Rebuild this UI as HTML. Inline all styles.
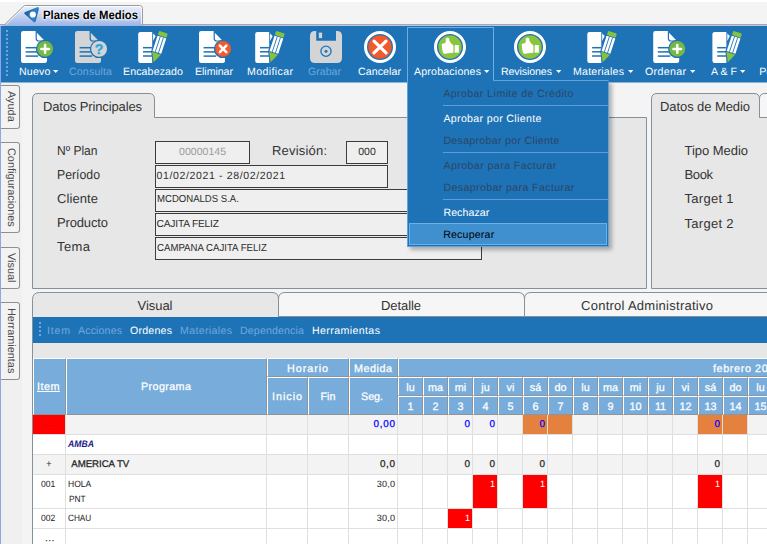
<!DOCTYPE html>
<html lang="es"><head><meta charset="utf-8"><title>Planes de Medios</title>
<style>
html,body{margin:0;padding:0;}
body{width:767px;height:544px;overflow:hidden;position:relative;background:#f4f4f4;font-family:"Liberation Sans",sans-serif;text-rendering:geometricPrecision;}
.a{position:absolute;display:block;}
.t{position:absolute;white-space:pre;line-height:1;}
</style></head><body>
<div class="a" style="left:0px;top:0px;width:767px;height:2px;background:#fff;"></div>
<svg class="a" style="left:0;top:0" width="767" height="26" viewBox="0 0 767 26"><defs><linearGradient id="tg" x1="0" y1="0" x2="0" y2="1"><stop offset="0" stop-color="#eef2fc"/><stop offset="0.45" stop-color="#c9d6f3"/><stop offset="1" stop-color="#9db4e6"/></linearGradient><linearGradient id="lg" x1="0" y1="0" x2="1" y2="0.3"><stop offset="0" stop-color="#1d5c9c"/><stop offset="1" stop-color="#2f8fcf"/></linearGradient></defs><path d="M0,24.5 L767,24.5" stroke="#a8a8a8" stroke-width="1"/><path d="M0,25.5 L767,25.5" stroke="#b7c6ee" stroke-width="1"/><path d="M4.5,26 L4.5,24.8 L23.4,6.4 Q24.4,5.5 26,5.5 L139.5,5.5 Q142.5,5.5 142.5,8.5 L142.5,26 Z" fill="url(#tg)" stroke="#9a9a9a" stroke-width="1"/><path d="M6,24.6 L24.2,7 Q25,6.5 26,6.5 L139.5,6.5 Q141.5,6.5 141.5,8.5 L141.5,24" fill="none" stroke="#fff" stroke-opacity="0.8" stroke-width="1"/><path d="M4,25.5 L143,25.5" stroke="#9db4e6" stroke-width="1"/><path d="M25.6,13.1 L37.6,8.4 L34.3,21.1 Z" fill="url(#lg)" stroke="url(#lg)" stroke-width="2.6" stroke-linejoin="round"/><path d="M34.3,21.1 L37.6,8.4 L38.6,9.5 L35.6,21.6 Z" fill="#123a60" fill-opacity="0.35"/><circle cx="32.8" cy="14.5" r="3.1" fill="#fff"/></svg>
<span class="t" style="left:43.40px;top:9px;font-size:12px;color:#000;transform:scaleX(0.9434);transform-origin:0 0;font-weight:bold;text-shadow:0 0 2px #fff,0 0 3px #fff,0 0 4px #fff;">Planes de Medios</span>
<div class="a" style="left:0px;top:26px;width:767px;height:57px;background:#1e73b7;"></div>
<div class="a" style="left:0px;top:26px;width:1px;height:518px;background:#8ea6e6;"></div>
<div class="a" style="left:6px;top:30px;width:2px;height:2px;background:#6ea6d9;"></div>
<div class="a" style="left:6px;top:34px;width:2px;height:2px;background:#6ea6d9;"></div>
<div class="a" style="left:6px;top:38px;width:2px;height:2px;background:#6ea6d9;"></div>
<div class="a" style="left:6px;top:42px;width:2px;height:2px;background:#6ea6d9;"></div>
<div class="a" style="left:6px;top:46px;width:2px;height:2px;background:#6ea6d9;"></div>
<div class="a" style="left:6px;top:50px;width:2px;height:2px;background:#6ea6d9;"></div>
<div class="a" style="left:6px;top:54px;width:2px;height:2px;background:#6ea6d9;"></div>
<div class="a" style="left:6px;top:58px;width:2px;height:2px;background:#6ea6d9;"></div>
<div class="a" style="left:6px;top:62px;width:2px;height:2px;background:#6ea6d9;"></div>
<div class="a" style="left:6px;top:66px;width:2px;height:2px;background:#6ea6d9;"></div>
<div class="a" style="left:6px;top:70px;width:2px;height:2px;background:#6ea6d9;"></div>
<div class="a" style="left:6px;top:74px;width:2px;height:2px;background:#6ea6d9;"></div>
<div class="a" style="left:407px;top:27px;width:87px;height:54px;border:1px solid #70acE2;border-bottom:none;box-sizing:border-box;"></div>
<svg class="a" style="left:14px;top:26px" width="48" height="40" viewBox="14 26 48 40"><path d="M21,33.2 Q21,31 23.2,31 L35.6,31 L35.6,38.5 Q35.6,41.6 38.8,41.6 L47,41.6 L47,60.8 Q47,63 44.8,63 L23.2,63 Q21,63 21,60.8 Z" fill="#fff"/><path d="M36.8,32.8 L43.4,39.6 Q44,40.4 43,40.4 L38.6,40.4 Q36.8,40.4 36.8,38.6 Z" fill="#fff"/><rect x="25.6" y="46.95" width="12.5" height="1.5" fill="#1e73b7"/><rect x="25.6" y="51.15" width="12.5" height="1.5" fill="#1e73b7"/><rect x="25.6" y="55.35" width="12.5" height="1.5" fill="#1e73b7"/><circle cx="45.1" cy="48.9" r="9.2" fill="#1e73b7"/><circle cx="45.1" cy="48.9" r="7.9" fill="#74b944"/><path d="M41.3,48.9 h7.6 M45.1,45.1 v7.6" stroke="#fff" stroke-width="2.5" stroke-linecap="round"/></svg>
<svg class="a" style="left:68px;top:26px" width="48" height="40" viewBox="68 26 48 40"><path d="M75,33.2 Q75,31 77.2,31 L89.6,31 L89.6,38.5 Q89.6,41.6 92.8,41.6 L101,41.6 L101,60.8 Q101,63 98.8,63 L77.2,63 Q75,63 75,60.8 Z" fill="#d3d4d6"/><path d="M90.8,32.8 L97.4,39.6 Q98,40.4 97,40.4 L92.6,40.4 Q90.8,40.4 90.8,38.6 Z" fill="#d3d4d6"/><rect x="79.6" y="46.95" width="12.5" height="1.5" fill="#1e73b7"/><rect x="79.6" y="51.15" width="12.5" height="1.5" fill="#1e73b7"/><rect x="79.6" y="55.35" width="12.5" height="1.5" fill="#1e73b7"/><circle cx="99.1" cy="48.9" r="9.2" fill="#1e73b7"/><circle cx="99.1" cy="48.9" r="7.9" fill="#d3d4d6"/><text x="99.1" y="53.9" font-family="Liberation Sans, sans-serif" font-weight="bold" font-size="14" fill="#29a8e0" stroke="#29a8e0" stroke-width="0.4" text-anchor="middle">?</text></svg>
<svg class="a" style="left:130px;top:26px" width="48" height="40" viewBox="130 26 48 40"><path d="M138.2,34.2 Q138.2,32 140.4,32 L152.2,32 L152.2,63 L140.4,63 Q138.2,63 138.2,60.8 Z" fill="#fff"/><path d="M153.1,33.6 L155.6,36 L153.1,41 Z" fill="#fff"/><rect x="143" y="46.95" width="9" height="1.5" fill="#1e73b7"/><rect x="143" y="51.05" width="9" height="1.5" fill="#1e73b7"/><rect x="143" y="55.25" width="9" height="1.5" fill="#1e73b7"/><g transform="translate(153.6,62.2) rotate(18.2629)"><path d="M0,1.6 L-5.8,-9.4 L-5.8,-32.5913 L5.8,-32.5913 L5.8,-9.4 Z" fill="#1e73b7"/><path d="M0,0 L-4.6,-9.4 L4.6,-9.4 Z" fill="#86c23e"/><rect x="-4.6" y="-26.3913" width="9.2" height="15.9913" fill="#fff"/><rect x="-2.1" y="-26.3913" width="0.85" height="15.9913" fill="#1e73b7"/><rect x="1.25" y="-26.3913" width="0.85" height="15.9913" fill="#1e73b7"/><rect x="-4.6" y="-31.5913" width="9.2" height="4.4" rx="1.2" fill="#86c23e"/></g></svg>
<svg class="a" style="left:192px;top:26px" width="48" height="40" viewBox="192 26 48 40"><path d="M199,33.2 Q199,31 201.2,31 L213.6,31 L213.6,38.5 Q213.6,41.6 216.8,41.6 L225,41.6 L225,60.8 Q225,63 222.8,63 L201.2,63 Q199,63 199,60.8 Z" fill="#fff"/><path d="M214.8,32.8 L221.4,39.6 Q222,40.4 221,40.4 L216.6,40.4 Q214.8,40.4 214.8,38.6 Z" fill="#fff"/><rect x="203.6" y="46.95" width="12.5" height="1.5" fill="#1e73b7"/><rect x="203.6" y="51.15" width="12.5" height="1.5" fill="#1e73b7"/><rect x="203.6" y="55.35" width="12.5" height="1.5" fill="#1e73b7"/><circle cx="223.1" cy="48.9" r="9.2" fill="#1e73b7"/><circle cx="223.1" cy="48.9" r="7.9" fill="#f05a2c"/><path d="M219.9,45.7 l6.4,6.4 M226.3,45.7 l-6.4,6.4" stroke="#fff" stroke-width="2.6" stroke-linecap="round"/></svg>
<svg class="a" style="left:247px;top:26px" width="48" height="40" viewBox="247 26 48 40"><path d="M255.2,34.2 Q255.2,32 257.4,32 L269.2,32 L269.2,63 L257.4,63 Q255.2,63 255.2,60.8 Z" fill="#fff"/><path d="M270.1,33.6 L272.6,36 L270.1,41 Z" fill="#fff"/><rect x="260" y="46.95" width="9" height="1.5" fill="#1e73b7"/><rect x="260" y="51.05" width="9" height="1.5" fill="#1e73b7"/><rect x="260" y="55.25" width="9" height="1.5" fill="#1e73b7"/><g transform="translate(270.6,62.2) rotate(18.2629)"><path d="M0,1.6 L-5.8,-9.4 L-5.8,-32.5913 L5.8,-32.5913 L5.8,-9.4 Z" fill="#1e73b7"/><path d="M0,0 L-4.6,-9.4 L4.6,-9.4 Z" fill="#86c23e"/><rect x="-4.6" y="-26.3913" width="9.2" height="15.9913" fill="#fff"/><rect x="-2.1" y="-26.3913" width="0.85" height="15.9913" fill="#1e73b7"/><rect x="1.25" y="-26.3913" width="0.85" height="15.9913" fill="#1e73b7"/><rect x="-4.6" y="-31.5913" width="9.2" height="4.4" rx="1.2" fill="#86c23e"/></g></svg>
<svg class="a" style="left:302px;top:26px" width="48" height="40" viewBox="302 26 48 40"><path d="M315,31 L316.2,31 L316.2,40.7 L336,40.7 L336,31 L337,31 Q342,31 342,36 L342,58 Q342,63 337,63 L315,63 Q310,63 310,58 L310,36 Q310,31 315,31 Z" fill="#d3d4d6"/><rect x="318.8" y="32.6" width="3.3" height="5.5" fill="#d3d4d6"/><circle cx="326" cy="51.2" r="5.1" fill="none" stroke="#1e73b7" stroke-width="1.3"/><circle cx="326" cy="51.2" r="1.5" fill="#1e73b7"/></svg>
<svg class="a" style="left:358px;top:26px" width="44" height="40" viewBox="358 26 44 40"><circle cx="380" cy="47" r="14.5" fill="none" stroke="#fff" stroke-width="3"/><circle cx="380" cy="47" r="11.7" fill="#f05a2c"/><path d="M374,41.2 l12,11.6 M386,41.2 l-12,11.6" stroke="#fff" stroke-width="3.2" stroke-linecap="round"/></svg>
<svg class="a" style="left:428px;top:26px" width="44" height="40" viewBox="428 26 44 40"><circle cx="450" cy="47" r="14.5" fill="none" stroke="#fff" stroke-width="3"/><circle cx="450" cy="47" r="11.7" fill="#8bc53f"/><path d="M442.3,44.4 L445.6,43.6 L446.4,41.4 L446.3,39 L447.5,38.2 L448.7,39 L449.1,41.6 L450.8,43.8 L452.6,45.4 L452.6,52.3 L444.4,53.3 L443.4,52.6 L442.7,48.5 Z" fill="#fff" stroke="#fff" stroke-width="1.1" stroke-linejoin="round"/><rect x="455" y="45" width="3.8" height="7.7" fill="#fff"/><rect x="453.2" y="45.4" width="1.6" height="7.2" fill="#fff" fill-opacity="0.45"/></svg>
<svg class="a" style="left:508px;top:26px" width="44" height="40" viewBox="508 26 44 40"><circle cx="530" cy="47" r="14.5" fill="none" stroke="#fff" stroke-width="3"/><circle cx="530" cy="47" r="11.7" fill="#8bc53f"/><path d="M522.3,44.4 L525.6,43.6 L526.4,41.4 L526.3,39 L527.5,38.2 L528.7,39 L529.1,41.6 L530.8,43.8 L532.6,45.4 L532.6,52.3 L524.4,53.3 L523.4,52.6 L522.7,48.5 Z" fill="#fff" stroke="#fff" stroke-width="1.1" stroke-linejoin="round"/><rect x="535" y="45" width="3.8" height="7.7" fill="#fff"/><rect x="533.2" y="45.4" width="1.6" height="7.2" fill="#fff" fill-opacity="0.45"/></svg>
<svg class="a" style="left:579px;top:26px" width="48" height="40" viewBox="579 26 48 40"><path d="M587.3,34.2 Q587.3,32 589.5,32 L601.3,32 L601.3,63 L589.5,63 Q587.3,63 587.3,60.8 Z" fill="#fff"/><path d="M602.2,33.6 L604.7,36 L602.2,41 Z" fill="#fff"/><rect x="592.1" y="46.95" width="9" height="1.5" fill="#1e73b7"/><rect x="592.1" y="51.05" width="9" height="1.5" fill="#1e73b7"/><rect x="592.1" y="55.25" width="9" height="1.5" fill="#1e73b7"/><g transform="translate(602.7,62.2) rotate(18.2629)"><path d="M0,1.6 L-5.8,-9.4 L-5.8,-32.5913 L5.8,-32.5913 L5.8,-9.4 Z" fill="#1e73b7"/><path d="M0,0 L-4.6,-9.4 L4.6,-9.4 Z" fill="#86c23e"/><rect x="-4.6" y="-26.3913" width="9.2" height="15.9913" fill="#fff"/><rect x="-2.1" y="-26.3913" width="0.85" height="15.9913" fill="#1e73b7"/><rect x="1.25" y="-26.3913" width="0.85" height="15.9913" fill="#1e73b7"/><rect x="-4.6" y="-31.5913" width="9.2" height="4.4" rx="1.2" fill="#86c23e"/></g></svg>
<svg class="a" style="left:646px;top:26px" width="48" height="40" viewBox="646 26 48 40"><path d="M653.2,33.2 Q653.2,31 655.4,31 L667.8,31 L667.8,38.5 Q667.8,41.6 671,41.6 L679.2,41.6 L679.2,60.8 Q679.2,63 677,63 L655.4,63 Q653.2,63 653.2,60.8 Z" fill="#fff"/><path d="M669,32.8 L675.6,39.6 Q676.2,40.4 675.2,40.4 L670.8,40.4 Q669,40.4 669,38.6 Z" fill="#fff"/><rect x="657.8" y="46.95" width="12.5" height="1.5" fill="#1e73b7"/><rect x="657.8" y="51.15" width="12.5" height="1.5" fill="#1e73b7"/><rect x="657.8" y="55.35" width="12.5" height="1.5" fill="#1e73b7"/><circle cx="677.3" cy="48.9" r="9.2" fill="#1e73b7"/><circle cx="677.3" cy="48.9" r="7.9" fill="#74b944"/><path d="M673.5,48.9 h7.6 M677.3,45.1 v7.6" stroke="#fff" stroke-width="2.5" stroke-linecap="round"/></svg>
<svg class="a" style="left:704px;top:26px" width="48" height="40" viewBox="704 26 48 40"><path d="M712.4,34.2 Q712.4,32 714.6,32 L726.4,32 L726.4,63 L714.6,63 Q712.4,63 712.4,60.8 Z" fill="#fff"/><path d="M727.3,33.6 L729.8,36 L727.3,41 Z" fill="#fff"/><rect x="717.2" y="46.95" width="9" height="1.5" fill="#1e73b7"/><rect x="717.2" y="51.05" width="9" height="1.5" fill="#1e73b7"/><rect x="717.2" y="55.25" width="9" height="1.5" fill="#1e73b7"/><g transform="translate(727.8,62.2) rotate(18.2629)"><path d="M0,1.6 L-5.8,-9.4 L-5.8,-32.5913 L5.8,-32.5913 L5.8,-9.4 Z" fill="#1e73b7"/><path d="M0,0 L-4.6,-9.4 L4.6,-9.4 Z" fill="#86c23e"/><rect x="-4.6" y="-26.3913" width="9.2" height="15.9913" fill="#fff"/><rect x="-2.1" y="-26.3913" width="0.85" height="15.9913" fill="#1e73b7"/><rect x="1.25" y="-26.3913" width="0.85" height="15.9913" fill="#1e73b7"/><rect x="-4.6" y="-31.5913" width="9.2" height="4.4" rx="1.2" fill="#86c23e"/></g></svg>
<span class="t" style="left:19.00px;top:67px;font-size:10.6px;color:#fff;letter-spacing:0.215px;">Nuevo</span>
<svg class="a" style="left:53px;top:69.6px" width="6" height="4" viewBox="53 69.6 6 4"><path d="M53,69.6 h5.4 l-2.7,3 Z" fill="#fff"/></svg>
<span class="t" style="left:69.00px;top:67px;font-size:10.6px;color:#6aa6dc;letter-spacing:0.166px;">Consulta</span>
<span class="t" style="left:123.00px;top:67px;font-size:10.6px;color:#fff;letter-spacing:0.118px;">Encabezado</span>
<span class="t" style="left:195.00px;top:67px;font-size:10.6px;color:#fff;letter-spacing:-0.041px;">Eliminar</span>
<span class="t" style="left:247.00px;top:67px;font-size:10.6px;color:#fff;letter-spacing:0.375px;">Modificar</span>
<span class="t" style="left:308.00px;top:67px;font-size:10.6px;color:#6aa6dc;letter-spacing:0.002px;">Grabar</span>
<span class="t" style="left:358.00px;top:67px;font-size:10.6px;color:#fff;letter-spacing:0.083px;">Cancelar</span>
<span class="t" style="left:414.00px;top:67px;font-size:10.6px;color:#fff;letter-spacing:0.198px;">Aprobaciones</span>
<svg class="a" style="left:483.8px;top:69.6px" width="6" height="4" viewBox="483.8 69.6 6 4"><path d="M483.8,69.6 h5.4 l-2.7,3 Z" fill="#fff"/></svg>
<span class="t" style="left:501.00px;top:67px;font-size:10.6px;color:#fff;letter-spacing:-0.094px;">Revisiones</span>
<svg class="a" style="left:555.8px;top:69.6px" width="6" height="4" viewBox="555.8 69.6 6 4"><path d="M555.8,69.6 h5.4 l-2.7,3 Z" fill="#fff"/></svg>
<span class="t" style="left:573.00px;top:67px;font-size:10.6px;color:#fff;letter-spacing:0.234px;">Materiales</span>
<svg class="a" style="left:627.8px;top:69.6px" width="6" height="4" viewBox="627.8 69.6 6 4"><path d="M627.8,69.6 h5.4 l-2.7,3 Z" fill="#fff"/></svg>
<span class="t" style="left:645.00px;top:67px;font-size:10.6px;color:#fff;letter-spacing:0.352px;">Ordenar</span>
<svg class="a" style="left:689.8px;top:69.6px" width="6" height="4" viewBox="689.8 69.6 6 4"><path d="M689.8,69.6 h5.4 l-2.7,3 Z" fill="#fff"/></svg>
<span class="t" style="left:711.00px;top:67px;font-size:10.6px;color:#fff;letter-spacing:0.020px;">A &amp; F</span>
<svg class="a" style="left:739.5px;top:69.6px" width="6" height="4" viewBox="739.5 69.6 6 4"><path d="M739.5,69.6 h5.4 l-2.7,3 Z" fill="#fff"/></svg>
<span class="t" style="left:759.20px;top:67px;font-size:10.6px;color:#fff;">Pe</span>
<div class="a" style="left:1px;top:83px;width:766px;height:461px;background:#f4f4f4;"></div>
<div class="a" style="left:1px;top:82px;width:766px;height:1px;background:#89b4d6;"></div>
<div class="a" style="left:1px;top:83px;width:20.5px;height:461px;background:#f0f0f0;"></div>
<div class="a" style="left:1px;top:85px;width:19px;height:44px;background:#f3f3f3;border:1px solid #8f8f8f;border-left:none;border-radius:0 3px 3px 0;box-sizing:border-box;"></div>
<span class="t" style="left:15.83px;top:91.20px;font-size:10.9px;color:#4a4a4a;transform:rotate(90deg);transform-origin:0 0;">Ayuda</span>
<div class="a" style="left:1px;top:142px;width:19px;height:91px;background:#f3f3f3;border:1px solid #8f8f8f;border-left:none;border-radius:0 3px 3px 0;box-sizing:border-box;"></div>
<span class="t" style="left:15.83px;top:148.20px;font-size:10.9px;color:#4a4a4a;transform:rotate(90deg);transform-origin:0 0;">Configuraciones</span>
<div class="a" style="left:1px;top:247px;width:19px;height:42px;background:#f3f3f3;border:1px solid #8f8f8f;border-left:none;border-radius:0 3px 3px 0;box-sizing:border-box;"></div>
<span class="t" style="left:15.83px;top:253.20px;font-size:10.9px;color:#4a4a4a;transform:rotate(90deg);transform-origin:0 0;">Visual</span>
<div class="a" style="left:1px;top:302px;width:19px;height:78px;background:#f3f3f3;border:1px solid #8f8f8f;border-left:none;border-radius:0 3px 3px 0;box-sizing:border-box;"></div>
<span class="t" style="left:15.83px;top:308.20px;font-size:10.9px;color:#4a4a4a;transform:rotate(90deg);transform-origin:0 0;">Herramientas</span>
<svg class="a" style="left:32px;top:93px" width="615" height="196" viewBox="32 93 615 196"><path d="M32.5,288.5 L32.5,99 Q32.5,93.5 38,93.5 L149,93.5 Q154.5,93.5 154.5,99 L154.5,117.5 L646.5,117.5 L646.5,288.5 Z" fill="#e7e7e7" stroke="#84909a" stroke-width="1"/></svg>
<svg class="a" style="left:651px;top:93px" width="149" height="196" viewBox="651 93 149 196"><path d="M651.5,288.5 L651.5,99 Q651.5,93.5 657,93.5 L754,93.5 Q759.5,93.5 759.5,99 L759.5,117.5 L799.5,117.5 L799.5,288.5 Z" fill="#e7e7e7" stroke="#84909a" stroke-width="1"/></svg>
<svg class="a" style="left:759px;top:93px" width="8" height="26" viewBox="759 93 8 26"><path d="M759.5,117.5 L759.5,99 Q759.5,93.5 765,93.5 L770,93.5 L770,117.5 Z" fill="#f6f6f6" stroke="#84909a"/></svg>
<span class="t" style="left:43.00px;top:100px;font-size:13px;color:#333;letter-spacing:-0.135px;">Datos Principales</span>
<span class="t" style="left:660.00px;top:100px;font-size:13px;color:#333;letter-spacing:-0.081px;">Datos de Medio</span>
<span class="t" style="left:57.00px;top:144px;font-size:13px;color:#333;transform:scaleX(0.9253);transform-origin:0 0;">Nº Plan</span>
<span class="t" style="left:57.00px;top:168px;font-size:13px;color:#333;transform:scaleX(0.9444);transform-origin:0 0;">Período</span>
<span class="t" style="left:57.00px;top:192px;font-size:13px;color:#333;letter-spacing:0.089px;">Cliente</span>
<span class="t" style="left:57.00px;top:216px;font-size:13px;color:#333;letter-spacing:-0.147px;">Producto</span>
<span class="t" style="left:57.00px;top:240px;font-size:13px;color:#333;letter-spacing:0.404px;">Tema</span>
<span class="t" style="left:684.50px;top:144px;font-size:13px;color:#333;letter-spacing:-0.036px;">Tipo Medio</span>
<span class="t" style="left:684.50px;top:168px;font-size:13px;color:#333;letter-spacing:-0.377px;">Book</span>
<span class="t" style="left:684.50px;top:192px;font-size:13px;color:#333;letter-spacing:0.290px;">Target 1</span>
<span class="t" style="left:684.50px;top:217px;font-size:13px;color:#333;letter-spacing:0.290px;">Target 2</span>
<span class="t" style="left:272.00px;top:144px;font-size:13px;color:#333;letter-spacing:0.192px;">Revisión:</span>
<div class="a" style="left:155px;top:141px;width:95px;height:23px;background:#efefef;border:1.5px solid #3c3c3c;border-right-width:1px;border-bottom-width:1px;box-sizing:border-box;"></div>
<span class="t" style="left:179.00px;top:147px;font-size:10.5px;color:#9a9a9a;letter-spacing:0.040px;">00000145</span>
<div class="a" style="left:346px;top:141px;width:42px;height:23px;background:#efefef;border:1.5px solid #3c3c3c;border-right-width:1px;border-bottom-width:1px;box-sizing:border-box;"></div>
<span class="t" style="left:358.20px;top:147px;font-size:10.5px;color:#2e2e2e;letter-spacing:0.041px;">000</span>
<div class="a" style="left:155px;top:165px;width:233px;height:23px;background:#efefef;border:1.5px solid #3c3c3c;border-right-width:1px;border-bottom-width:1px;box-sizing:border-box;"></div>
<span class="t" style="left:156.50px;top:171px;font-size:10.5px;color:#2e2e2e;letter-spacing:0.639px;">01/02/2021 - 28/02/2021</span>
<div class="a" style="left:155px;top:189px;width:327px;height:23px;background:#efefef;border:1.5px solid #3c3c3c;border-right-width:1px;border-bottom-width:1px;box-sizing:border-box;"></div>
<span class="t" style="left:156.50px;top:195px;font-size:10.2px;color:#2e2e2e;transform:scaleX(0.9395);transform-origin:0 0;">MCDONALDS S.A.</span>
<div class="a" style="left:155px;top:213px;width:327px;height:23px;background:#efefef;border:1.5px solid #3c3c3c;border-right-width:1px;border-bottom-width:1px;box-sizing:border-box;"></div>
<span class="t" style="left:156.50px;top:220px;font-size:10.2px;color:#2e2e2e;letter-spacing:-0.175px;">CAJITA FELIZ</span>
<div class="a" style="left:155px;top:237px;width:327px;height:23px;background:#efefef;border:1.5px solid #3c3c3c;border-right-width:1px;border-bottom-width:1px;box-sizing:border-box;"></div>
<span class="t" style="left:156.50px;top:244px;font-size:10.2px;color:#2e2e2e;transform:scaleX(0.9452);transform-origin:0 0;">CAMPANA CAJITA FELIZ</span>
<svg class="a" style="left:32px;top:292px" width="735" height="26" viewBox="32 292 735 26"><path d="M32.5,318 L32.5,299.5 Q32.5,292.5 39.5,292.5 L272,292.5 Q278.5,292.5 278.5,299 L278.5,318 Z" fill="#e7e7e7" stroke="#84909a"/><path d="M278.5,316.5 L278.5,299 Q278.5,292.5 285,292.5 L518,292.5 Q524.5,292.5 524.5,299 L524.5,316.5 Z" fill="#f6f6f6" stroke="#84909a"/><path d="M524.5,316.5 L524.5,299 Q524.5,292.5 531,292.5 L770,292.5 L770,316.5 Z" fill="#f6f6f6" stroke="#84909a"/></svg>
<div class="a" style="left:32px;top:317px;width:1px;height:227px;background:#84909a;"></div>
<div class="a" style="left:33px;top:317px;width:734px;height:227px;background:#e7e7e7;"></div>
<span class="t" style="left:137.50px;top:299px;font-size:13px;color:#333;letter-spacing:-0.035px;">Visual</span>
<span class="t" style="left:381.00px;top:299px;font-size:13px;color:#333;letter-spacing:-0.078px;">Detalle</span>
<span class="t" style="left:581.00px;top:299px;font-size:13px;color:#333;letter-spacing:0.265px;">Control Administrativo</span>
<div class="a" style="left:33px;top:317px;width:734px;height:26px;background:#1e73b7;"></div>
<div class="a" style="left:39px;top:322px;width:2px;height:2px;background:#6ea6d9;"></div>
<div class="a" style="left:39px;top:326px;width:2px;height:2px;background:#6ea6d9;"></div>
<div class="a" style="left:39px;top:330px;width:2px;height:2px;background:#6ea6d9;"></div>
<div class="a" style="left:39px;top:334px;width:2px;height:2px;background:#6ea6d9;"></div>
<span class="t" style="left:47.00px;top:326px;font-size:10.6px;color:#70a8dc;letter-spacing:0.795px;">Item</span>
<span class="t" style="left:78.00px;top:326px;font-size:10.6px;color:#70a8dc;letter-spacing:0.141px;">Acciones</span>
<span class="t" style="left:130.00px;top:326px;font-size:10.6px;color:#fff;letter-spacing:0.224px;">Ordenes</span>
<span class="t" style="left:180.00px;top:326px;font-size:10.6px;color:#70a8dc;letter-spacing:0.345px;">Materiales</span>
<span class="t" style="left:240.00px;top:326px;font-size:10.6px;color:#70a8dc;letter-spacing:0.153px;">Dependencia</span>
<span class="t" style="left:312.00px;top:326px;font-size:10.6px;color:#fff;letter-spacing:0.398px;">Herramientas</span>
<div class="a" style="left:33px;top:358px;width:734px;height:56.5px;background:#78addb;"></div>
<div class="a" style="left:33px;top:358px;width:33px;height:57px;background:#78addb;border-left:1px solid #fbfdff;border-top:1px solid #fbfdff;border-right:1px solid #8f9499;border-bottom:1px solid #8f9499;box-sizing:border-box;"></div>
<div class="a" style="left:66px;top:358px;width:201px;height:57px;background:#78addb;border-left:1px solid #fbfdff;border-top:1px solid #fbfdff;border-right:1px solid #8f9499;border-bottom:1px solid #8f9499;box-sizing:border-box;"></div>
<div class="a" style="left:267px;top:358px;width:82px;height:19px;background:#78addb;border-left:1px solid #fbfdff;border-top:1px solid #fbfdff;border-right:1px solid #8f9499;border-bottom:1px solid #8f9499;box-sizing:border-box;"></div>
<div class="a" style="left:267px;top:377px;width:41px;height:38px;background:#78addb;border-left:1px solid #fbfdff;border-top:1px solid #fbfdff;border-right:1px solid #8f9499;border-bottom:1px solid #8f9499;box-sizing:border-box;"></div>
<div class="a" style="left:308px;top:377px;width:41px;height:38px;background:#78addb;border-left:1px solid #fbfdff;border-top:1px solid #fbfdff;border-right:1px solid #8f9499;border-bottom:1px solid #8f9499;box-sizing:border-box;"></div>
<div class="a" style="left:349px;top:358px;width:49px;height:19px;background:#78addb;border-left:1px solid #fbfdff;border-top:1px solid #fbfdff;border-right:1px solid #8f9499;border-bottom:1px solid #8f9499;box-sizing:border-box;"></div>
<div class="a" style="left:349px;top:377px;width:49px;height:38px;background:#78addb;border-left:1px solid #fbfdff;border-top:1px solid #fbfdff;border-right:1px solid #8f9499;border-bottom:1px solid #8f9499;box-sizing:border-box;"></div>
<div class="a" style="left:398px;top:358px;width:402px;height:19px;background:#78addb;border-left:1px solid #fbfdff;border-top:1px solid #fbfdff;border-right:1px solid #8f9499;border-bottom:1px solid #8f9499;box-sizing:border-box;"></div>
<div class="a" style="left:398px;top:377px;width:25px;height:19px;background:#78addb;border-left:1px solid #fbfdff;border-top:1px solid #fbfdff;border-right:1px solid #8f9499;border-bottom:1px solid #8f9499;box-sizing:border-box;"></div>
<div class="a" style="left:398px;top:396px;width:25px;height:19px;background:#78addb;border-left:1px solid #fbfdff;border-top:1px solid #fbfdff;border-right:1px solid #8f9499;border-bottom:1px solid #8f9499;box-sizing:border-box;"></div>
<span class="t" style="left:406.30px;top:383px;font-size:10.8px;color:#fff;-webkit-text-stroke:0.25px #fff;">lu</span>
<span class="t" style="left:407.50px;top:402px;font-size:10.8px;color:#fff;-webkit-text-stroke:0.25px #fff;">1</span>
<div class="a" style="left:423px;top:377px;width:25px;height:19px;background:#78addb;border-left:1px solid #fbfdff;border-top:1px solid #fbfdff;border-right:1px solid #8f9499;border-bottom:1px solid #8f9499;box-sizing:border-box;"></div>
<div class="a" style="left:423px;top:396px;width:25px;height:19px;background:#78addb;border-left:1px solid #fbfdff;border-top:1px solid #fbfdff;border-right:1px solid #8f9499;border-bottom:1px solid #8f9499;box-sizing:border-box;"></div>
<span class="t" style="left:428.00px;top:383px;font-size:10.8px;color:#fff;-webkit-text-stroke:0.25px #fff;">ma</span>
<span class="t" style="left:432.50px;top:402px;font-size:10.8px;color:#fff;-webkit-text-stroke:0.25px #fff;">2</span>
<div class="a" style="left:448px;top:377px;width:25px;height:19px;background:#78addb;border-left:1px solid #fbfdff;border-top:1px solid #fbfdff;border-right:1px solid #8f9499;border-bottom:1px solid #8f9499;box-sizing:border-box;"></div>
<div class="a" style="left:448px;top:396px;width:25px;height:19px;background:#78addb;border-left:1px solid #fbfdff;border-top:1px solid #fbfdff;border-right:1px solid #8f9499;border-bottom:1px solid #8f9499;box-sizing:border-box;"></div>
<span class="t" style="left:454.80px;top:383px;font-size:10.8px;color:#fff;-webkit-text-stroke:0.25px #fff;">mi</span>
<span class="t" style="left:457.50px;top:402px;font-size:10.8px;color:#fff;-webkit-text-stroke:0.25px #fff;">3</span>
<div class="a" style="left:473px;top:377px;width:25px;height:19px;background:#78addb;border-left:1px solid #fbfdff;border-top:1px solid #fbfdff;border-right:1px solid #8f9499;border-bottom:1px solid #8f9499;box-sizing:border-box;"></div>
<div class="a" style="left:473px;top:396px;width:25px;height:19px;background:#78addb;border-left:1px solid #fbfdff;border-top:1px solid #fbfdff;border-right:1px solid #8f9499;border-bottom:1px solid #8f9499;box-sizing:border-box;"></div>
<span class="t" style="left:481.30px;top:383px;font-size:10.8px;color:#fff;-webkit-text-stroke:0.25px #fff;">ju</span>
<span class="t" style="left:482.50px;top:402px;font-size:10.8px;color:#fff;-webkit-text-stroke:0.25px #fff;">4</span>
<div class="a" style="left:498px;top:377px;width:25px;height:19px;background:#78addb;border-left:1px solid #fbfdff;border-top:1px solid #fbfdff;border-right:1px solid #8f9499;border-bottom:1px solid #8f9499;box-sizing:border-box;"></div>
<div class="a" style="left:498px;top:396px;width:25px;height:19px;background:#78addb;border-left:1px solid #fbfdff;border-top:1px solid #fbfdff;border-right:1px solid #8f9499;border-bottom:1px solid #8f9499;box-sizing:border-box;"></div>
<span class="t" style="left:506.60px;top:383px;font-size:10.8px;color:#fff;-webkit-text-stroke:0.25px #fff;">vi</span>
<span class="t" style="left:507.50px;top:402px;font-size:10.8px;color:#fff;-webkit-text-stroke:0.25px #fff;">5</span>
<div class="a" style="left:523px;top:377px;width:25px;height:19px;background:#78addb;border-left:1px solid #fbfdff;border-top:1px solid #fbfdff;border-right:1px solid #8f9499;border-bottom:1px solid #8f9499;box-sizing:border-box;"></div>
<div class="a" style="left:523px;top:396px;width:25px;height:19px;background:#78addb;border-left:1px solid #fbfdff;border-top:1px solid #fbfdff;border-right:1px solid #8f9499;border-bottom:1px solid #8f9499;box-sizing:border-box;"></div>
<span class="t" style="left:529.80px;top:383px;font-size:10.8px;color:#fff;-webkit-text-stroke:0.25px #fff;">sá</span>
<span class="t" style="left:532.50px;top:402px;font-size:10.8px;color:#fff;-webkit-text-stroke:0.25px #fff;">6</span>
<div class="a" style="left:548px;top:377px;width:25px;height:19px;background:#78addb;border-left:1px solid #fbfdff;border-top:1px solid #fbfdff;border-right:1px solid #8f9499;border-bottom:1px solid #8f9499;box-sizing:border-box;"></div>
<div class="a" style="left:548px;top:396px;width:25px;height:19px;background:#78addb;border-left:1px solid #fbfdff;border-top:1px solid #fbfdff;border-right:1px solid #8f9499;border-bottom:1px solid #8f9499;box-sizing:border-box;"></div>
<span class="t" style="left:554.49px;top:383px;font-size:10.8px;color:#fff;-webkit-text-stroke:0.25px #fff;">do</span>
<span class="t" style="left:557.50px;top:402px;font-size:10.8px;color:#fff;-webkit-text-stroke:0.25px #fff;">7</span>
<div class="a" style="left:573px;top:377px;width:25px;height:19px;background:#78addb;border-left:1px solid #fbfdff;border-top:1px solid #fbfdff;border-right:1px solid #8f9499;border-bottom:1px solid #8f9499;box-sizing:border-box;"></div>
<div class="a" style="left:573px;top:396px;width:25px;height:19px;background:#78addb;border-left:1px solid #fbfdff;border-top:1px solid #fbfdff;border-right:1px solid #8f9499;border-bottom:1px solid #8f9499;box-sizing:border-box;"></div>
<span class="t" style="left:581.30px;top:383px;font-size:10.8px;color:#fff;-webkit-text-stroke:0.25px #fff;">lu</span>
<span class="t" style="left:582.50px;top:402px;font-size:10.8px;color:#fff;-webkit-text-stroke:0.25px #fff;">8</span>
<div class="a" style="left:598px;top:377px;width:25px;height:19px;background:#78addb;border-left:1px solid #fbfdff;border-top:1px solid #fbfdff;border-right:1px solid #8f9499;border-bottom:1px solid #8f9499;box-sizing:border-box;"></div>
<div class="a" style="left:598px;top:396px;width:25px;height:19px;background:#78addb;border-left:1px solid #fbfdff;border-top:1px solid #fbfdff;border-right:1px solid #8f9499;border-bottom:1px solid #8f9499;box-sizing:border-box;"></div>
<span class="t" style="left:603.00px;top:383px;font-size:10.8px;color:#fff;-webkit-text-stroke:0.25px #fff;">ma</span>
<span class="t" style="left:607.50px;top:402px;font-size:10.8px;color:#fff;-webkit-text-stroke:0.25px #fff;">9</span>
<div class="a" style="left:623px;top:377px;width:25px;height:19px;background:#78addb;border-left:1px solid #fbfdff;border-top:1px solid #fbfdff;border-right:1px solid #8f9499;border-bottom:1px solid #8f9499;box-sizing:border-box;"></div>
<div class="a" style="left:623px;top:396px;width:25px;height:19px;background:#78addb;border-left:1px solid #fbfdff;border-top:1px solid #fbfdff;border-right:1px solid #8f9499;border-bottom:1px solid #8f9499;box-sizing:border-box;"></div>
<span class="t" style="left:629.80px;top:383px;font-size:10.8px;color:#fff;-webkit-text-stroke:0.25px #fff;">mi</span>
<span class="t" style="left:629.49px;top:402px;font-size:10.8px;color:#fff;-webkit-text-stroke:0.25px #fff;">10</span>
<div class="a" style="left:648px;top:377px;width:25px;height:19px;background:#78addb;border-left:1px solid #fbfdff;border-top:1px solid #fbfdff;border-right:1px solid #8f9499;border-bottom:1px solid #8f9499;box-sizing:border-box;"></div>
<div class="a" style="left:648px;top:396px;width:25px;height:19px;background:#78addb;border-left:1px solid #fbfdff;border-top:1px solid #fbfdff;border-right:1px solid #8f9499;border-bottom:1px solid #8f9499;box-sizing:border-box;"></div>
<span class="t" style="left:656.30px;top:383px;font-size:10.8px;color:#fff;-webkit-text-stroke:0.25px #fff;">ju</span>
<span class="t" style="left:654.89px;top:402px;font-size:10.8px;color:#fff;-webkit-text-stroke:0.25px #fff;">11</span>
<div class="a" style="left:673px;top:377px;width:25px;height:19px;background:#78addb;border-left:1px solid #fbfdff;border-top:1px solid #fbfdff;border-right:1px solid #8f9499;border-bottom:1px solid #8f9499;box-sizing:border-box;"></div>
<div class="a" style="left:673px;top:396px;width:25px;height:19px;background:#78addb;border-left:1px solid #fbfdff;border-top:1px solid #fbfdff;border-right:1px solid #8f9499;border-bottom:1px solid #8f9499;box-sizing:border-box;"></div>
<span class="t" style="left:681.60px;top:383px;font-size:10.8px;color:#fff;-webkit-text-stroke:0.25px #fff;">vi</span>
<span class="t" style="left:679.49px;top:402px;font-size:10.8px;color:#fff;-webkit-text-stroke:0.25px #fff;">12</span>
<div class="a" style="left:698px;top:377px;width:25px;height:19px;background:#78addb;border-left:1px solid #fbfdff;border-top:1px solid #fbfdff;border-right:1px solid #8f9499;border-bottom:1px solid #8f9499;box-sizing:border-box;"></div>
<div class="a" style="left:698px;top:396px;width:25px;height:19px;background:#78addb;border-left:1px solid #fbfdff;border-top:1px solid #fbfdff;border-right:1px solid #8f9499;border-bottom:1px solid #8f9499;box-sizing:border-box;"></div>
<span class="t" style="left:704.80px;top:383px;font-size:10.8px;color:#fff;-webkit-text-stroke:0.25px #fff;">sá</span>
<span class="t" style="left:704.49px;top:402px;font-size:10.8px;color:#fff;-webkit-text-stroke:0.25px #fff;">13</span>
<div class="a" style="left:723px;top:377px;width:25px;height:19px;background:#78addb;border-left:1px solid #fbfdff;border-top:1px solid #fbfdff;border-right:1px solid #8f9499;border-bottom:1px solid #8f9499;box-sizing:border-box;"></div>
<div class="a" style="left:723px;top:396px;width:25px;height:19px;background:#78addb;border-left:1px solid #fbfdff;border-top:1px solid #fbfdff;border-right:1px solid #8f9499;border-bottom:1px solid #8f9499;box-sizing:border-box;"></div>
<span class="t" style="left:729.49px;top:383px;font-size:10.8px;color:#fff;-webkit-text-stroke:0.25px #fff;">do</span>
<span class="t" style="left:729.49px;top:402px;font-size:10.8px;color:#fff;-webkit-text-stroke:0.25px #fff;">14</span>
<div class="a" style="left:748px;top:377px;width:25px;height:19px;background:#78addb;border-left:1px solid #fbfdff;border-top:1px solid #fbfdff;border-right:1px solid #8f9499;border-bottom:1px solid #8f9499;box-sizing:border-box;"></div>
<div class="a" style="left:748px;top:396px;width:25px;height:19px;background:#78addb;border-left:1px solid #fbfdff;border-top:1px solid #fbfdff;border-right:1px solid #8f9499;border-bottom:1px solid #8f9499;box-sizing:border-box;"></div>
<span class="t" style="left:756.30px;top:383px;font-size:10.8px;color:#fff;-webkit-text-stroke:0.25px #fff;">lu</span>
<span class="t" style="left:754.49px;top:402px;font-size:10.8px;color:#fff;-webkit-text-stroke:0.25px #fff;">15</span>
<span class="t" style="left:37.00px;top:382px;font-size:10.8px;color:#fff;letter-spacing:0.499px;-webkit-text-stroke:0.25px #fff;text-decoration:underline;">Item</span>
<span class="t" style="left:141.00px;top:382px;font-size:10.8px;color:#fff;letter-spacing:0.369px;-webkit-text-stroke:0.25px #fff;">Programa</span>
<span class="t" style="left:287.00px;top:364px;font-size:10.8px;color:#fff;letter-spacing:0.931px;-webkit-text-stroke:0.25px #fff;">Horario</span>
<span class="t" style="left:354.00px;top:364px;font-size:10.8px;color:#fff;letter-spacing:0.516px;-webkit-text-stroke:0.25px #fff;">Medida</span>
<span class="t" style="left:272.00px;top:392px;font-size:10.8px;color:#fff;letter-spacing:0.958px;-webkit-text-stroke:0.25px #fff;">Inicio</span>
<span class="t" style="left:320.50px;top:392px;font-size:10.8px;color:#fff;letter-spacing:-0.002px;-webkit-text-stroke:0.25px #fff;">Fin</span>
<span class="t" style="left:361.00px;top:392px;font-size:10.8px;color:#fff;letter-spacing:-0.072px;-webkit-text-stroke:0.25px #fff;">Seg.</span>
<span class="t" style="left:713.00px;top:364px;font-size:10.8px;color:#fff;letter-spacing:0.614px;-webkit-text-stroke:0.25px #fff;">febrero 2021</span>
<div class="a" style="left:33px;top:415px;width:734px;height:19px;background:#f3f3f3;"></div>
<div class="a" style="left:33px;top:434px;width:734px;height:1px;background:#dfdfdf;"></div>
<div class="a" style="left:33px;top:435px;width:734px;height:19px;background:#fff;"></div>
<div class="a" style="left:33px;top:454px;width:734px;height:1px;background:#dfdfdf;"></div>
<div class="a" style="left:33px;top:455px;width:734px;height:19px;background:#f3f3f3;"></div>
<div class="a" style="left:33px;top:474px;width:734px;height:1px;background:#dfdfdf;"></div>
<div class="a" style="left:33px;top:475px;width:734px;height:33px;background:#fff;"></div>
<div class="a" style="left:33px;top:508px;width:734px;height:1px;background:#dfdfdf;"></div>
<div class="a" style="left:33px;top:509px;width:734px;height:19px;background:#fff;"></div>
<div class="a" style="left:33px;top:528px;width:734px;height:1px;background:#dfdfdf;"></div>
<div class="a" style="left:33px;top:529px;width:734px;height:15px;background:#fff;"></div>
<div class="a" style="left:33px;top:544px;width:734px;height:1px;background:#dfdfdf;"></div>
<div class="a" style="left:65px;top:415px;width:1px;height:129px;background:#dfdfdf;"></div>
<div class="a" style="left:266px;top:415px;width:1px;height:129px;background:#dfdfdf;"></div>
<div class="a" style="left:307px;top:415px;width:1px;height:129px;background:#dfdfdf;"></div>
<div class="a" style="left:348px;top:415px;width:1px;height:129px;background:#dfdfdf;"></div>
<div class="a" style="left:397px;top:415px;width:1px;height:129px;background:#dfdfdf;"></div>
<div class="a" style="left:422px;top:415px;width:1px;height:129px;background:#dfdfdf;"></div>
<div class="a" style="left:447px;top:415px;width:1px;height:129px;background:#dfdfdf;"></div>
<div class="a" style="left:472px;top:415px;width:1px;height:129px;background:#dfdfdf;"></div>
<div class="a" style="left:497px;top:415px;width:1px;height:129px;background:#dfdfdf;"></div>
<div class="a" style="left:522px;top:415px;width:1px;height:129px;background:#dfdfdf;"></div>
<div class="a" style="left:547px;top:415px;width:1px;height:129px;background:#dfdfdf;"></div>
<div class="a" style="left:572px;top:415px;width:1px;height:129px;background:#dfdfdf;"></div>
<div class="a" style="left:597px;top:415px;width:1px;height:129px;background:#dfdfdf;"></div>
<div class="a" style="left:622px;top:415px;width:1px;height:129px;background:#dfdfdf;"></div>
<div class="a" style="left:647px;top:415px;width:1px;height:129px;background:#dfdfdf;"></div>
<div class="a" style="left:672px;top:415px;width:1px;height:129px;background:#dfdfdf;"></div>
<div class="a" style="left:697px;top:415px;width:1px;height:129px;background:#dfdfdf;"></div>
<div class="a" style="left:722px;top:415px;width:1px;height:129px;background:#dfdfdf;"></div>
<div class="a" style="left:747px;top:415px;width:1px;height:129px;background:#dfdfdf;"></div>
<div class="a" style="left:772px;top:415px;width:1px;height:129px;background:#dfdfdf;"></div>
<div class="a" style="left:33px;top:415px;width:32px;height:19px;background:#fe0000;"></div>
<div class="a" style="left:523px;top:415px;width:24px;height:19px;background:#e5813f;"></div>
<div class="a" style="left:548px;top:415px;width:24px;height:19px;background:#e5813f;"></div>
<div class="a" style="left:698px;top:415px;width:24px;height:19px;background:#e5813f;"></div>
<div class="a" style="left:723px;top:415px;width:24px;height:19px;background:#e5813f;"></div>
<div class="a" style="left:473px;top:475px;width:24px;height:33px;background:#fe0000;"></div>
<div class="a" style="left:523px;top:475px;width:24px;height:33px;background:#fe0000;"></div>
<div class="a" style="left:698px;top:475px;width:24px;height:33px;background:#fe0000;"></div>
<div class="a" style="left:448px;top:509px;width:24px;height:19px;background:#fe0000;"></div>
<span class="t" style="left:45.30px;top:419px;font-size:8.7px;color:#b00000;letter-spacing:0.874px;">...</span>
<span class="t" style="left:373.50px;top:420px;font-size:9.9px;color:#0000ff;letter-spacing:0.744px;-webkit-text-stroke:0.25px #0000ff;">0,00</span>
<span class="t" style="left:464.49px;top:420px;font-size:9.9px;color:#0000ff;-webkit-text-stroke:0.25px #0000ff;">0</span>
<span class="t" style="left:489.49px;top:420px;font-size:9.9px;color:#0000ff;-webkit-text-stroke:0.25px #0000ff;">0</span>
<span class="t" style="left:539.49px;top:420px;font-size:9.9px;color:#0000ff;-webkit-text-stroke:0.25px #0000ff;">0</span>
<span class="t" style="left:714.49px;top:420px;font-size:9.9px;color:#0000ff;-webkit-text-stroke:0.25px #0000ff;">0</span>
<span class="t" style="left:68.30px;top:439px;font-size:9.4px;color:#1a1a8c;transform:scaleX(0.9221);transform-origin:0 0;font-weight:bold;font-style:italic;">AMBA</span>
<span class="t" style="left:46.10px;top:460px;font-size:9.8px;color:#333;">+</span>
<span class="t" style="left:71.30px;top:460px;font-size:9.7px;color:#222;letter-spacing:-0.064px;-webkit-text-stroke:0.25px #222;">AMERICA TV</span>
<span class="t" style="left:380.00px;top:460px;font-size:9.9px;color:#222;letter-spacing:0.619px;-webkit-text-stroke:0.25px #222;">0,0</span>
<span class="t" style="left:464.49px;top:460px;font-size:9.9px;color:#222;-webkit-text-stroke:0.25px #222;">0</span>
<span class="t" style="left:489.49px;top:460px;font-size:9.9px;color:#222;-webkit-text-stroke:0.25px #222;">0</span>
<span class="t" style="left:539.49px;top:460px;font-size:9.9px;color:#222;-webkit-text-stroke:0.25px #222;">0</span>
<span class="t" style="left:714.49px;top:460px;font-size:9.9px;color:#222;-webkit-text-stroke:0.25px #222;">0</span>
<span class="t" style="left:41.00px;top:480px;font-size:9.1px;color:#222;transform:scaleX(0.9418);transform-origin:0 0;">001</span>
<span class="t" style="left:68.40px;top:480px;font-size:9.1px;color:#222;transform:scaleX(0.9402);transform-origin:0 0;">HOLA</span>
<span class="t" style="left:68.50px;top:495px;font-size:9.1px;color:#222;transform:scaleX(0.9121);transform-origin:0 0;">PNT</span>
<span class="t" style="left:376.70px;top:480px;font-size:9.1px;color:#222;letter-spacing:0.196px;">30,0</span>
<span class="t" style="left:489.94px;top:480px;font-size:9.1px;color:#fff;">1</span>
<span class="t" style="left:539.94px;top:480px;font-size:9.1px;color:#fff;">1</span>
<span class="t" style="left:714.94px;top:480px;font-size:9.1px;color:#fff;">1</span>
<span class="t" style="left:41.00px;top:514px;font-size:9.1px;color:#222;transform:scaleX(0.9418);transform-origin:0 0;">002</span>
<span class="t" style="left:68.40px;top:514px;font-size:9.1px;color:#222;transform:scaleX(0.9036);transform-origin:0 0;">CHAU</span>
<span class="t" style="left:376.70px;top:514px;font-size:9.1px;color:#222;letter-spacing:0.196px;">30,0</span>
<span class="t" style="left:464.94px;top:514px;font-size:9.1px;color:#fff;">1</span>
<span class="t" style="left:45.30px;top:534px;font-size:8.7px;color:#333;letter-spacing:0.874px;-webkit-text-stroke:0.25px #333;">...</span>
<div class="a" style="left:407px;top:80px;width:201.5px;height:166.5px;background:#1e73b7;border:1px solid #62a3dc;box-sizing:border-box;box-shadow:3px 3px 4px rgba(0,0,0,0.28);clip-path:polygon(0 0,100% 0,100% 3px,120% 3px,120% 120%,0 120%);"></div>
<div class="a" style="left:408px;top:79px;width:85px;height:3px;background:#1e73b7;"></div>
<span class="t" style="left:443.40px;top:89px;font-size:10.6px;color:#2b4664;letter-spacing:0.359px;">Aprobar Límite de Crédito</span>
<div class="a" style="left:443px;top:105px;width:165px;height:1px;background:#5a9bd8;"></div>
<span class="t" style="left:443.40px;top:114px;font-size:10.6px;color:#fff;letter-spacing:0.338px;">Aprobar por Cliente</span>
<span class="t" style="left:443.40px;top:136px;font-size:10.6px;color:#2b4664;letter-spacing:0.305px;">Desaprobar por Cliente</span>
<div class="a" style="left:443px;top:152px;width:165px;height:1px;background:#5a9bd8;"></div>
<span class="t" style="left:443.40px;top:161px;font-size:10.6px;color:#2b4664;letter-spacing:0.436px;">Aprobar para Facturar</span>
<span class="t" style="left:443.40px;top:183px;font-size:10.6px;color:#2b4664;letter-spacing:0.393px;">Desaprobar para Facturar</span>
<div class="a" style="left:443px;top:199px;width:165px;height:1px;background:#5a9bd8;"></div>
<span class="t" style="left:443.40px;top:208px;font-size:10.6px;color:#fff;letter-spacing:0.091px;">Rechazar</span>
<div class="a" style="left:409px;top:223px;width:197.5px;height:21.5px;background:#4090d0;border:1px solid #6db0e6;box-sizing:border-box;"></div>
<span class="t" style="left:443.20px;top:230px;font-size:10.6px;color:#000;letter-spacing:0.189px;">Recuperar</span>
</body></html>
